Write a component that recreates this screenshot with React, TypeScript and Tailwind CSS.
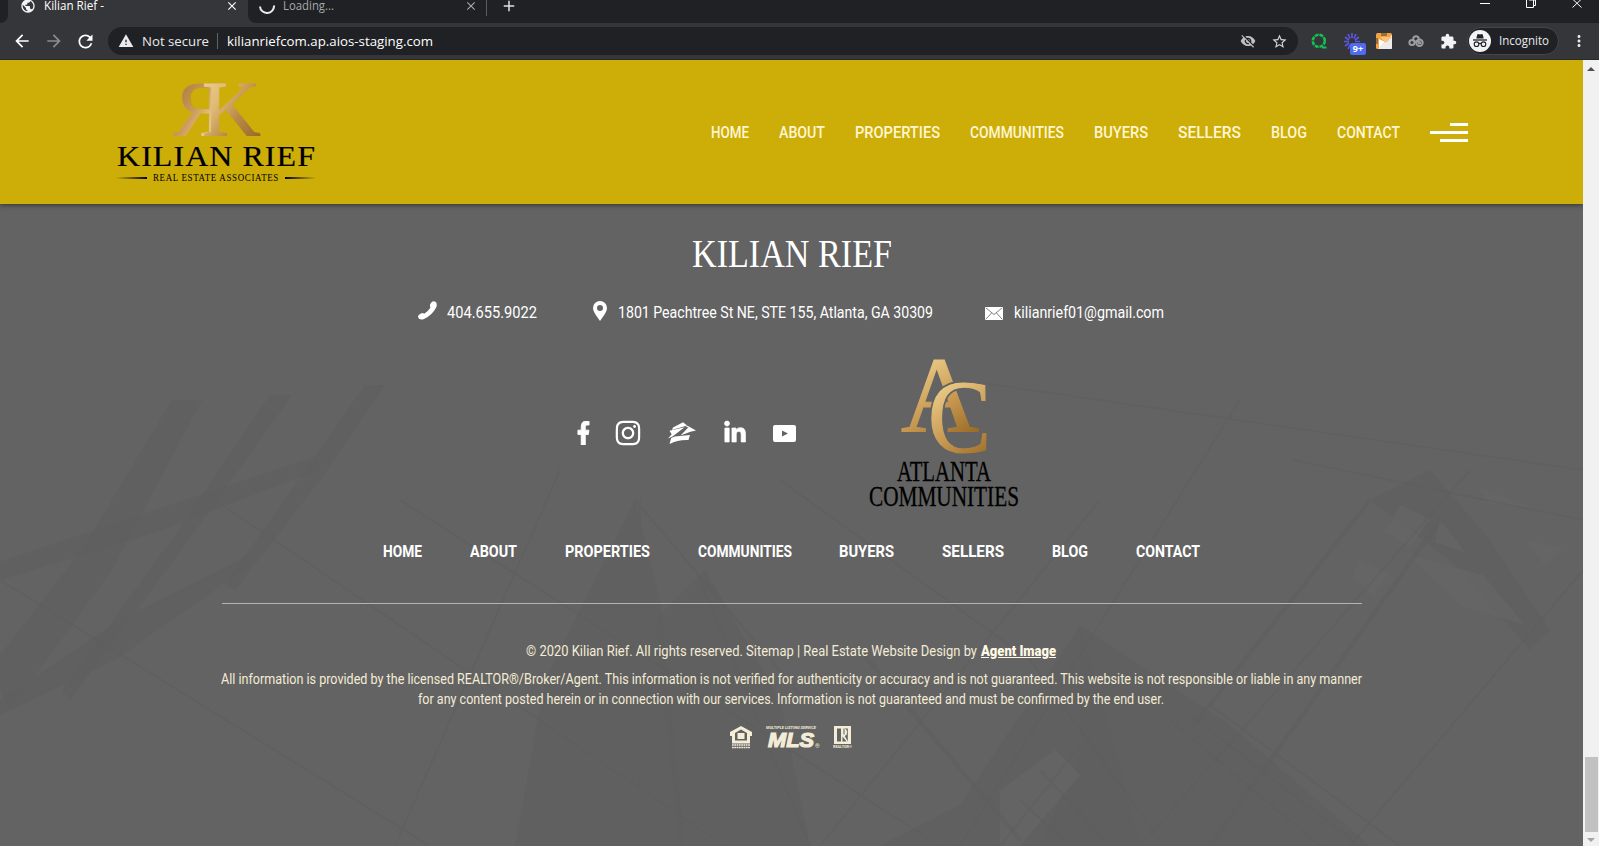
import { useLayoutEffect, useRef, useState } from "react";
import type { ReactNode } from "react";
import { FaFacebookF, FaInstagram, FaLinkedinIn } from "react-icons/fa";
import { MdArrowBack, MdArrowForward, MdRefresh, MdExtension, MdStarBorder, MdWarning, MdPublic, MdVisibilityOff, MdClose, MdAdd, MdMoreVert } from "react-icons/md";

/** One line of text, condensed or widened so that it fills the width of its box. */
function Fit({ className = "", children }: { className?: string; children: ReactNode }) {
  const box = useRef<HTMLSpanElement>(null);
  const text = useRef<HTMLSpanElement>(null);
  const [scale, setScale] = useState(1);
  useLayoutEffect(() => {
    if (box.current && text.current && text.current.offsetWidth) {
      const natural = text.current.getBoundingClientRect().width / scale;
      setScale(box.current.clientWidth / natural);
    }
  }, []);
  return (
    <span ref={box} className={`block shrink-0 ${className}`}>
      <span ref={text} className="inline-block origin-left whitespace-nowrap align-top" style={{ transform: `scaleX(${scale})` }}>
        {children}
      </span>
    </span>
  );
}

function TabStrip() {
  return (
    <div className="flex h-[23px] bg-[#202124] font-['Open_Sans',sans-serif] text-[12px] leading-[16px]">
      <div className="w-[8px] bg-[#35363a]"><div className="h-full rounded-br-lg bg-[#202124]" /></div>
      <div className="flex w-[240px] items-start bg-[#35363a] pl-[12px] text-white">
        <MdPublic className="-mt-[2px] size-4 shrink-0 text-[#f1f3f4]" />
        <Fit className="-mt-[2px] ml-[8px] w-[60px]">Kilian Rief -</Fit>
        <MdClose className="ml-[121px] -mt-px size-[14px] shrink-0" />
      </div>
      <div className="flex w-[238px] items-start bg-[#35363a] text-[#a5a8ac]">
        <div className="flex h-full w-full rounded-bl-lg bg-[#202124] pl-[11px]">
          <svg className="-mt-[2px] size-4 shrink-0" viewBox="0 0 16 16"><path d="M1 8.500a7 7 0 0 0 14-1" fill="none" stroke="#e8eaed" strokeWidth="2" /></svg>
          <Fit className="-mt-[2px] ml-[8px] w-[51px]">Loading...</Fit>
          <MdClose className="ml-[130px] -mt-px size-[14px] shrink-0" />
        </div>
      </div>
      <div className="h-4 w-px bg-[#5a5c60]" />
      <MdAdd className="ml-[13px] -mt-[3px] size-[18px] text-[#dee1e6]" />
      <div className="ml-auto flex pr-[16px] text-white">
        <svg width="103" height="10" viewBox="0 0 103 10" fill="none" stroke="#fff">
          <path d="M0 3.500h10M46.500 0v7.500h7v-7.500M49 0h6.500v5.500h-2M92.500 -1l9 8.500M101.500 -1l-9 8.500" />
        </svg>
      </div>
    </div>
  );
}

function Incognito() {
  return (
    <svg className="size-[22px] shrink-0" viewBox="0 0 22 22">
      <circle cx="11" cy="11" r="11" fill="#f1f3f4" />
      <path d="M7.300 8.500l1-4 .8-.5 1.900.6 1.900-.6.800.5 1 4z" fill="#202124" />
      <path d="M4 10h14" stroke="#202124" strokeWidth="1.300" />
      <g fill="none" stroke="#202124" strokeWidth="1.100"><circle cx="7.500" cy="14.200" r="2.300" /><circle cx="14.500" cy="14.200" r="2.300" /><path d="M9.800 13.800q1.200-.8 2.400 0" /></g>
    </svg>
  );
}

function Toolbar() {
  return (
    <div className="flex h-[37px] items-center border-b border-[#292a2d] bg-[#35363a] pl-[12px] font-['Open_Sans',sans-serif] text-[13px] leading-[18px] text-[#e8eaed]">
      <MdArrowBack className="size-[20px] text-white" />
      <MdArrowForward className="ml-[12px] size-[20px] text-[#8a8c8f]" />
      <MdRefresh className="ml-[11px] size-[21px] text-white" />
      <div className="ml-[12px] flex h-[28px] w-[1190px] items-center rounded-full bg-[#202124] pl-[10px] pr-[10px]">
        <MdWarning className="size-4 shrink-0" />
        <Fit className="ml-[8px] w-[67px]">Not secure</Fit>
        <div className="ml-[8px] h-4 w-px shrink-0 bg-[#5f6368]" />
        <Fit className="ml-[9px] w-[206px] text-white">kilianriefcom.ap.aios-staging.com</Fit>
        <MdVisibilityOff className="ml-auto size-4 shrink-0 text-[#bdc1c6]" />
        <MdStarBorder className="ml-[15px] size-[17px] shrink-0 text-[#d0d3d7]" />
      </div>
      <svg className="ml-[13px] size-4" viewBox="0 0 16 16" fill="none">
        <circle cx="7.800" cy="7.800" r="6" stroke="#13c152" strokeWidth="2.600" strokeDasharray="3.800 .9" />
        <path d="M11 14.500h4.500" stroke="#13c152" strokeWidth="2" />
      </svg>
      <div className="relative ml-[17px] size-4">
        <svg viewBox="0 0 16 16" stroke="#5b55e0" strokeWidth="1.700">
          <path d="M8 5V0M9.800 5.500L12 1M10.900 7l4-3M11 8.500h5M6.200 5.500L4 1M5 7L1 4M5 8.500H0M5 10l-4 3M6.200 11.500L4 16M8 12v4" />
        </svg>
        <span className="absolute left-[6px] top-[10px] flex h-[12px] w-[16px] items-center justify-center rounded-[2px] bg-[#4f6bf0] text-[9px] font-bold text-white">9+</span>
      </div>
      <svg className="ml-[16px] size-4" viewBox="0 0 16 16">
        <rect width="16" height="16" rx="1.500" fill="#f0a244" /><path d="M16 3v12q0 1-1 1H2L16 2z" fill="#ececec" /><path d="M3 6v9l6-6z" fill="#fff" /><path d="M4 4h12l-6 6z" fill="#fbc47c" />
        <path d="M6 0v3M8 0v3M10 0v3M0 6h2M0 8h2M0 10h2" stroke="#4a3a25" />
      </svg>
      <svg className="ml-[16px] size-4" viewBox="0 0 16 16" fill="none" stroke="#9b9da0" strokeWidth="2">
        <circle cx="4" cy="9.500" r="2.600" /><circle cx="8" cy="6" r="2.800" /><circle cx="11.500" cy="9.800" r="3.200" /><circle cx="11.500" cy="9.800" r=".8" />
      </svg>
      <MdExtension className="ml-[16px] size-[17px] text-[#f1f3f4]" />
      <div className="ml-[10px] flex h-[28px] w-[92px] items-center rounded-full border border-[#44464a] bg-[#202124] pl-px">
        <Incognito />
        <Fit className="ml-[8px] w-[50px] text-[12px]">Incognito</Fit>
      </div>
      <MdMoreVert className="ml-[11px] size-[18px]" />
    </div>
  );
}

function KilianLogo() {
  return (
    <div className="flex w-[200px] flex-col items-center font-['Liberation_Serif',serif] text-black">
      <svg className="mt-px h-[55px] w-[92px]" viewBox="0 0 92 55">
        <defs>
          <linearGradient id="rGold" x1="1" y1="0" x2="0" y2="1">
            <stop offset="0" stopColor="#9a6a25" /><stop offset=".45" stopColor="#c8995a" /><stop offset=".7" stopColor="#efd08d" /><stop offset="1" stopColor="#a87432" />
          </linearGradient>
          <linearGradient id="kGold" x1="0" y1="0" x2="1" y2="1">
            <stop offset="0" stopColor="#f2d694" /><stop offset=".35" stopColor="#e0b976" /><stop offset=".6" stopColor="#b98a48" /><stop offset="1" stopColor="#8d5e1c" />
          </linearGradient>
        </defs>
        <text transform="translate(56 54) scale(-1 1)" fontSize="79" fill="url(#rGold)" stroke="url(#rGold)" strokeWidth=".8">R</text>
        <text transform="translate(32 54) scale(1.030 1)" fontSize="79" fill="url(#kGold)" stroke="url(#kGold)" strokeWidth=".8">K</text>
      </svg>
      <Fit className="mt-[3px] w-[199px] text-[30px] leading-[34px] tracking-[1px] [-webkit-text-stroke:0.200px_black]">KILIAN RIEF</Fit>
      <div className="-mt-px flex w-[200px] items-center justify-between">
        <div className="h-[2px] w-[31px] bg-gradient-to-r from-transparent to-black" />
        <Fit className="w-[126px] text-[9.500px] leading-[12px] tracking-[0.700px]">REAL ESTATE ASSOCIATES</Fit>
        <div className="h-[2px] w-[31px] bg-gradient-to-l from-transparent to-black" />
      </div>
    </div>
  );
}

function Header() {
  return (
    <header className="relative flex h-[144px] shrink-0 items-center bg-[#cdad07] pl-[116px] shadow-[0_1px_5px_rgba(0,0,0,0.500)]">
      <KilianLogo />
      <nav className="ml-[395px] mt-[2px] flex gap-[30px] text-[16px] font-medium leading-6 text-[#fff6d2]">
        <Fit className="w-[38px]">HOME</Fit>
        <Fit className="w-[46px]">ABOUT</Fit>
        <Fit className="w-[85px]">PROPERTIES</Fit>
        <Fit className="w-[94px]">COMMUNITIES</Fit>
        <Fit className="w-[54px]">BUYERS</Fit>
        <Fit className="w-[63px]">SELLERS</Fit>
        <Fit className="w-[36px]">BLOG</Fit>
        <Fit className="w-[63px]">CONTACT</Fit>
      </nav>
      <div className="ml-[30px] flex w-[38px] flex-col items-end gap-[5px]">
        <div className="h-[3px] w-[18px] bg-white" />
        <div className="h-[3px] w-[38px] bg-white" />
        <div className="h-[3px] w-[28px] bg-white" />
      </div>
    </header>
  );
}

/** Faint skyline and steel-frame drawing behind the footer. */
function Backdrop() {
  return (
    <svg className="absolute inset-0 h-full w-full" viewBox="0 204 1583 642" preserveAspectRatio="none" aria-hidden="true">
      <g fill="#5e5e5e" fillOpacity=".5">
        <path d="M172 400h30L112 570 10 710 0 690 0 655 85 545z" />
        <path d="M270 395h22L185 545 70 700 62 690 175 535z" />
        <path d="M365 385h20L320 480 235 590 225 585z" />
        <path d="M0 562l150-50 165-55 5 12-160 62L0 580zM0 700l120-80 130-65v10L115 660 0 715z" />
        <path d="M635 500l-90 180-30 166h170L660 600z" />
        <path d="M655 620l50-50 75 130 30 146h-130z" />
        <path d="M1080 625l-120 180-80 41h260l-20-80z" />
        <path d="M1080 625l150 100 140 121h-330l40-90z" />
        <path d="M1370 500l60-30 60 70 60 90-20 20-80-90z" />
      </g>
      <g fill="#686868" fillOpacity=".6">
        <path d="M1400 505l30 14-20 28-24-15zM1440 520l25 32-30-10zM1408 555l75 20 42 50-65-20zM1360 560l28 14-14 22-22-18zM1480 488l55 20-45-4zM1525 540l38 8-18 18z" />
        <path d="M1000 790l55-40 25 25-60 71h-20z" />
      </g>
      <g fill="none" stroke="#5d5d5d" strokeOpacity=".5">
        <path d="M0 580l430 266M215 500l510 346M400 500L940 846M780 480l250 180 130 180M960 380l623 90M1583 570L1350 846M1240 400L960 846M1100 500L820 846M1583 520l-290-60M560 470L395 846M640 500v346M700 580l110 266M635 500l170 200M1470 470l-330 376" strokeWidth="1.500" />
        <path d="M860 650l160 190M1370 500l-180 230M1440 520l-230 326" strokeWidth="4" />
        <path d="M1000 846l80-100M1020 800l50 46M1040 770l70 76M1170 720l150 126M1190 715l170 131M1210 705l190 141" strokeWidth="2" />
      </g>
    </svg>
  );
}

function ZillowIcon() {
  return (
    <svg className="h-[22px] w-[28px]" viewBox="0 0 28 22" fill="#fff">
      <path d="M5 5.500L15 .2 19.200 3.400 4 8z" />
      <path d="M19.500 3.700L28 8.600 22.500 9.800 12.500 13.600 20.500 5.200 17.500 5z" />
      <path d="M1.500 8.800L16.500 5.300 4.500 14.500 0 16.500 3.700 12.300z" />
      <path d="M3.200 16L7 14.500 22 13l-1.500 5Q10 17.500 1.500 22z" />
    </svg>
  );
}

function AtlantaLogo() {
  return (
    <div className="flex w-[150px] flex-col items-center font-['Liberation_Serif',serif] text-black">
      <svg className="h-[96px] w-[92px]" viewBox="898 357 92 96">
        <defs>
          <linearGradient id="acGold" gradientUnits="userSpaceOnUse" x1="20" y1="-75" x2="75" y2="10">
            <stop offset="0" stopColor="#edd08c" /><stop offset=".5" stopColor="#c89a54" /><stop offset="1" stopColor="#93631a" />
          </linearGradient>
        </defs>
        <text transform="translate(901 430.500)" fontSize="108" fill="url(#acGold)" stroke="url(#acGold)" strokeWidth="1.200">A</text>
        <text transform="translate(928 450.500) scale(.910 1)" fontSize="104" fill="url(#acGold)" stroke="#636363" strokeWidth="5" paintOrder="stroke">C</text>
        <text transform="translate(928 450.500) scale(.910 1)" fontSize="104" fill="url(#acGold)" stroke="url(#acGold)" strokeWidth="1.200">C</text>
      </svg>
      <Fit className="mt-[5px] w-[94px] text-[28.500px] leading-[25px] [-webkit-text-stroke:0.300px_black]">ATLANTA</Fit>
      <Fit className="w-[150px] text-[28.500px] leading-[25px] [-webkit-text-stroke:0.300px_black]">COMMUNITIES</Fit>
    </div>
  );
}

function Contacts() {
  return (
    <div className="mt-[27px] flex h-6 items-start pl-[418px] text-[16px] leading-6">
      <svg className="h-[19px] w-[19px]" viewBox="0 0 19 19" fill="#fff"><path d="M14 .8q2-1.500 4 .5 1.500 2.500 0 5.500Q14 14.500 6 18q-3 1.200-5-.3-2-2.200 0-4l2-1.300q1.800-.9 3.200.4Q9.700 11 12.500 6.500 11.500 5 12.300 3z" /></svg>
      <Fit className="ml-[10px] w-[90px]">404.655.9022</Fit>
      <svg className="ml-[56px] h-[20px] w-[14px]" viewBox="0 0 14 20"><path fillRule="evenodd" d="M7 0a7 7 0 0 1 7 7q0 3-3.500 8L7 20 3.500 15Q0 10 0 7a7 7 0 0 1 7-7zm0 4a3 3 0 1 0 0 6 3 3 0 0 0 0-6z" fill="#fff" /></svg>
      <Fit className="ml-[11px] w-[315px]">1801 Peachtree St NE, STE 155, Atlanta, GA 30309</Fit>
      <svg className="ml-[52px] mt-[6px] h-[13px] w-[18px]" viewBox="0 0 18 13"><rect width="18" height="13" rx="1" fill="#fff" /><path d="M1 1l8 6.500L17 1M1 12l5.500-6M17 12l-5.500-6" fill="none" stroke="#636363" strokeWidth=".8" /></svg>
      <Fit className="ml-[11px] w-[150px]">kilianrief01@gmail.com</Fit>
    </div>
  );
}

function Badges() {
  return (
    <div className="mt-[17px] flex h-[24px] pl-[730px] text-[#f3ecd6]">
      <svg className="h-[23px] w-[22px]" viewBox="0 0 22 23" fill="#f3ecd6">
        <path fillRule="evenodd" d="M11 0l11 6v4h-2v7.500H2V10H0V6zm0 3.500L5 7v7.500h12V7z" /><path d="M7.500 7h7v6h-7z" /><path d="M2 19h18M2 21.500h18" stroke="#f3ecd6" strokeWidth="1.700" strokeDasharray="1.800 .5" />
      </svg>
      <div className="ml-[14px] flex w-[54px] flex-col">
        <Fit className="w-[50px] text-[4px] font-bold italic leading-[4px]">MULTIPLE LISTING SERVICE</Fit>
        <div className="flex items-end">
          <Fit className="ml-[2px] w-[46px] font-['Liberation_Sans',sans-serif] text-[21px] font-bold italic leading-[19px] [-webkit-text-stroke:1.200px_#f3ecd6]">MLS</Fit>
          <span className="ml-px text-[6px] leading-[7px]">®</span>
        </div>
      </div>
      <div className="ml-[13px] flex w-[19px] flex-col items-center">
        <svg className="h-[18px] w-[17px]" viewBox="0 0 17 18">
          <path d="M0 0h17v18H0z" fill="#f3ecd6" />
          <path d="M3 2.500h4v13H3zM9.500 2.500h1v6h-1zM8.500 10.500l4 5h-4z" fill="#636363" /><path d="M13.800 2.500v13l-3-5.500q2.500-1 2.300-4t-2.300-3.500z" fill="#636363" />
        </svg>
        <Fit className="mt-px w-[19px] text-[4px] font-bold leading-[4px]">REALTOR®</Fit>
      </div>
    </div>
  );
}

function Footer() {
  return (
    <footer className="relative h-[642px] bg-[#636363] text-white">
      <Backdrop />
      <div className="relative flex flex-col pt-[30px]">
        <Fit className="ml-[692px] w-[200px] font-['Liberation_Serif',serif] text-[39px] leading-[40px]">KILIAN RIEF</Fit>
        <Contacts />
        <div className="mt-[33px] flex h-[150px] items-center pl-[577px]">
          <FaFacebookF className="h-[24px] w-[13px]" preserveAspectRatio="none" stroke="white" strokeWidth={20} />
          <FaInstagram className="ml-[24px] size-[28px]" />
          <div className="ml-[26px]"><ZillowIcon /></div>
          <FaLinkedinIn className="ml-[27px] size-[24px] overflow-visible" stroke="white" strokeWidth={14} />
          <svg className="ml-[26px] h-[17px] w-[23px]" viewBox="0 0 23 17"><path fillRule="evenodd" d="M2 0h19q2 0 2 2v13q0 2-2 2H2q-2 0-2-2V2q0-2 2-2zm7 5.500v6l6-3z" fill="#fff" /></svg>
          <div className="ml-[73px] flex h-full items-start"><AtlantaLogo /></div>
        </div>
        <nav className="mt-[32px] flex h-6 w-[817px] justify-between ml-[383px] text-[16px] font-bold leading-6">
          <Fit className="w-[39px]">HOME</Fit>
          <Fit className="w-[47px]">ABOUT</Fit>
          <Fit className="w-[85px]">PROPERTIES</Fit>
          <Fit className="w-[94px]">COMMUNITIES</Fit>
          <Fit className="w-[55px]">BUYERS</Fit>
          <Fit className="w-[62px]">SELLERS</Fit>
          <Fit className="w-[36px]">BLOG</Fit>
          <Fit className="w-[64px]">CONTACT</Fit>
        </nav>
        <div className="ml-[222px] mt-[39px] h-px w-[1140px] bg-[#b3b3b3]" />
        <div className="mt-[37px] flex h-5 gap-[4px] pl-[526px] text-[14px] leading-5 text-[#f3ecd6]">
          <Fit className="w-[451px]">© 2020 Kilian Rief. All rights reserved. Sitemap | Real Estate Website Design by</Fit>
          <Fit className="w-[75px] font-black text-[#fff9e6]"><span className="underline">Agent Image</span></Fit>
        </div>
        <div className="mt-[8px] text-[14px] leading-5 text-[#f3ecd6]">
          <Fit className="ml-[221px] w-[1141px]">All information is provided by the licensed REALTOR®/Broker/Agent. This information is not verified for authenticity or accuracy and is not guaranteed. This website is not responsible or liable in any manner</Fit>
          <Fit className="ml-[418px] w-[746px]">for any content posted herein or in connection with our services. Information is not guaranteed and must be confirmed by the end user.</Fit>
        </div>
        <Badges />
      </div>
    </footer>
  );
}

function Scrollbar() {
  return (
    <div className="flex h-full w-[16px] flex-col items-center bg-[#f1f1f1]">
      <svg className="mt-[6px] h-[6px] w-[8px]" viewBox="0 0 8 6"><path d="M0 5l4-4 4 4z" fill="#505050" /></svg>
      <div className="mt-[685px] h-[75px] w-[13px] bg-[#c1c1c1]" />
      <svg className="mt-[5px] h-[6px] w-[8px]" viewBox="0 0 8 6"><path d="M0 1l4 4 4-4z" fill="#a3a3a3" /></svg>
    </div>
  );
}

export default function App() {
  return (
    <div className="flex h-[846px] w-[1599px] flex-col overflow-hidden bg-[#636363]">
      <TabStrip />
      <Toolbar />
      <div className="flex h-[786px]">
        <main className="flex w-[1583px] flex-col overflow-hidden font-['Roboto',sans-serif]">
          <div className="relative z-10"><Header /></div>
          <Footer />
        </main>
        <Scrollbar />
      </div>
    </div>
  );
}
